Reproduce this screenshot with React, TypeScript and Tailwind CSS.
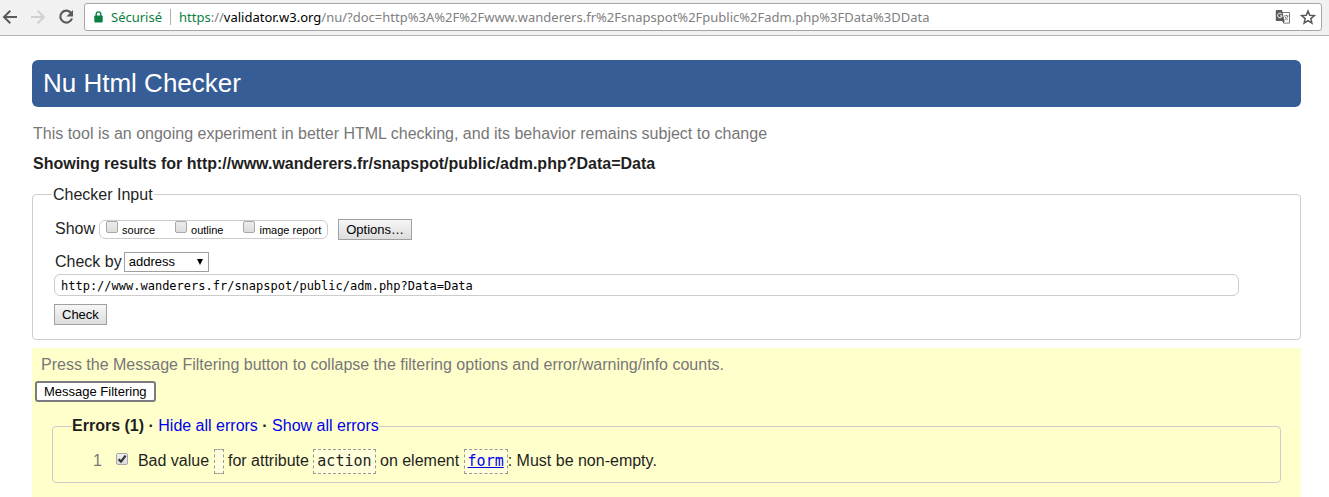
import type { ButtonHTMLAttributes, InputHTMLAttributes, ReactNode } from 'react';

const ADDRESS = 'http://www.wanderers.fr/snapspot/public/adm.php?Data=Data';

function ToolbarButton({ label, children }: { label: string; children: ReactNode }) {
  return (
    <button type="button" aria-label={label} className="flex size-4 shrink-0 items-center justify-center">
      {children}
    </button>
  );
}

function BrowserBar() {
  return (
    <header className="flex h-9 items-center border-b border-[#b4b4b4] bg-[#f1f1f1] pr-[7px] pb-px pl-0.5">
      <nav className="mr-[10px] flex gap-3" aria-label="Browser">
        <ToolbarButton label="Back">
          <svg width="16" height="16" viewBox="0 0 16 16" fill="none" stroke="#5a5a5a" strokeWidth="2">
            <path d="M15 8H2.5M8.3 1.7 2 8l6.3 6.3" />
          </svg>
        </ToolbarButton>
        <ToolbarButton label="Forward">
          <svg width="16" height="16" viewBox="0 0 16 16" fill="none" stroke="#d0d0d0" strokeWidth="2">
            <path d="M1 8h12.5M7.7 1.7 14 8l-6.3 6.3" />
          </svg>
        </ToolbarButton>
        <ToolbarButton label="Reload">
          <svg width="16" height="16" viewBox="0 0 16 16" fill="none">
            <path d="M13.3 4.2A6 6 0 1 0 14 9.5" stroke="#5a5a5a" strokeWidth="2.2" />
            <path d="M15 1v6.6H8.4z" fill="#5a5a5a" />
          </svg>
        </ToolbarButton>
      </nav>
      <div className="flex h-7 min-w-0 flex-1 items-center rounded-[3px] border border-[#a6a6a6] bg-white pr-[5px] pl-[9px] font-['Noto_Sans','Open_Sans',sans-serif] text-[13px]">
        <svg width="9" height="12" viewBox="0 0 9 12" className="shrink-0" aria-hidden="true">
          <path d="M2.2 5V3.2a2.3 2.3 0 0 1 4.6 0V5" fill="none" stroke="#0b8043" strokeWidth="1.4" />
          <rect x="0.3" y="4.4" width="8.4" height="7" rx="0.8" fill="#0b8043" />
        </svg>
        <span className="ml-2 text-[#0b8043]">Sécurisé</span>
        <span className="mx-2 h-4 w-px shrink-0 bg-[#b0b0b0]" />
        <div role="textbox" aria-label="Address" className="min-w-0 flex-1 truncate text-[#808080]">
          <span className="text-[#0b8043]">https</span>://<span className="text-black">validator.w3.org</span>
          /nu/?doc=http%3A%2F%2Fwww.wanderers.fr%2Fsnapspot%2Fpublic%2Fadm.php%3FData%3DData
        </div>
        <button type="button" aria-label="Translate" className="mr-[9px] shrink-0">
          <svg width="16" height="16" viewBox="0 0 16 16">
            <path d="M5.5 3.5h9v10.6H8.6z" fill="#fff" stroke="#777" strokeWidth="1" />
            <path d="M1.8 1H7l2.6 11H1.8a1 1 0 0 1-1-1V2a1 1 0 0 1 1-1z" fill="#5a5a5a" />
            <path d="M6.6 4.9a2.3 2.3 0 1 0 .6 2H5" fill="none" stroke="#fff" strokeWidth="1" />
            <path d="M9.3 6.8h4.2M11.4 5.8v1M12.8 7c-.4 1.8-1.4 3-2.6 4M10 7.8c.7 1.6 1.7 2.6 3 3.4" fill="none" stroke="#777" strokeWidth="0.9" />
            <path d="M7.3 12h2.4l-1.2 2z" fill="#5a5a5a" />
          </svg>
        </button>
        <button type="button" aria-label="Bookmark this page" className="shrink-0">
          <svg width="16" height="16" viewBox="0 0 16 16">
            <path
              d="M8 2l1.7 4.2 4.6.4-3.5 3 1.1 4.5L8 11.7l-3.9 2.4 1.1-4.5-3.5-3 4.6-.4z"
              fill="none"
              stroke="#5a5a5a"
              strokeWidth="1.5"
            />
          </svg>
        </button>
      </div>
    </header>
  );
}

function GreyButton(props: ButtonHTMLAttributes<HTMLButtonElement>) {
  return (
    <button
      type="button"
      className="block h-[21px] border border-[#a0a0a0] bg-linear-to-b from-[#f6f6f6] to-[#dddddd] px-[7px] text-[13px] leading-[19px] text-black"
      {...props}
    />
  );
}

function Tick({ className = '', ...rest }: InputHTMLAttributes<HTMLInputElement>) {
  return (
    <span className={`relative flex size-3 shrink-0 ${className}`}>
      <input
        type="checkbox"
        className="peer size-3 appearance-none rounded-xs border border-[#a8a8a8] bg-linear-to-b from-[#ececec] to-[#dcdcdc]"
        {...rest}
      />
      <svg
        viewBox="0 0 12 12"
        className="pointer-events-none absolute inset-0 hidden size-3 peer-checked:block"
        fill="none"
        stroke="#333"
        strokeWidth="2.2"
      >
        <path d="M2.6 6.2 5 8.6l4.6-6" />
      </svg>
    </span>
  );
}

function ShowOption({ id, label }: { id: string; label: string }) {
  return (
    <div className="flex items-start gap-1">
      <Tick id={id} />
      <label htmlFor={id} className="pt-px text-[11px] leading-4 text-black">
        {label}
      </label>
    </div>
  );
}

function Code({ children }: { children?: ReactNode }) {
  return (
    <code className="inline-flex h-[25px] min-w-[10px] items-center border border-dashed border-[#999] bg-[#ffffe6]/60 px-[3px] align-middle font-['DejaVu_Sans_Mono',monospace] text-[15px]">
      {children}
    </code>
  );
}

function CheckerInput() {
  return (
    <fieldset className="mt-[10px] rounded-[4px] border border-[#ccc] pr-[61px] pb-[14px] pl-[21px]">
      <legend className="-ml-0.5 px-px pt-px">Checker Input</legend>
      <div className="mt-[14px] flex items-center">
        <span className="mr-1 pb-px pl-px">Show</span>
        <div className="flex h-[19px] items-start gap-5 rounded-md border border-[#ccc] px-[6px]">
          <ShowOption id="show-source" label="source" />
          <ShowOption id="show-outline" label="outline" />
          <ShowOption id="show-image" label="image report" />
        </div>
        <div className="ml-[10px]">
          <GreyButton>Options…</GreyButton>
        </div>
      </div>
      <div className="mt-3 flex items-center gap-0.5">
        <label htmlFor="check-by" className="pl-px">
          Check by
        </label>
        <div className="relative">
          <select
            id="check-by"
            defaultValue="address"
            className="block h-5 w-[85px] appearance-none border border-[#a0a0a0] bg-white pl-1 text-[13px] leading-[18px] text-black"
          >
            <option value="address">address</option>
            <option value="upload">file upload</option>
            <option value="text">text input</option>
          </select>
          <svg viewBox="0 0 6 6" className="pointer-events-none absolute top-[7px] right-[6px] size-[6px]">
            <path d="M0 0h6L3 6z" fill="#000" />
          </svg>
        </div>
      </div>
      <input
        aria-label="Address to check"
        type="url"
        defaultValue={ADDRESS}
        className="mt-0.5 block h-[22px] w-full rounded-md border border-[#ccc] bg-white px-[6px] pt-0.5 font-['DejaVu_Sans_Mono',monospace] text-xs text-black"
      />
      <div className="mt-2">
        <GreyButton type="submit">Check</GreyButton>
      </div>
    </fieldset>
  );
}

function Filtering() {
  return (
    <section className="mt-2 bg-[#ffffcc] px-5 pt-[7px] pb-5">
      <p className="-ml-[11px] text-[#777]">
        Press the Message Filtering button to collapse the filtering options and error/warning/info counts.
      </p>
      <button
        type="button"
        className="mt-[6px] -ml-[17px] block h-[21px] rounded-[3px] border-2 border-[#7a7a80] bg-white px-[7px] text-[13px] leading-[17px] text-black"
      >
        Message Filtering
      </button>
      <fieldset className="mt-[14px] rounded-[4px] border border-[#ccc] pb-2 pl-10">
        <legend className="-ml-[21px]">
          <b>Errors (1)</b> <b>·</b>{' '}
          <a href="#hide" className="text-[#0000ee]">
            Hide all errors
          </a>{' '}
          <b>·</b>{' '}
          <a href="#show" className="text-[#0000ee]">
            Show all errors
          </a>
        </legend>
        <ol className="mt-3">
          <li className="flex items-center">
            <span className="mr-[14px] text-[#777]">1</span>
            <Tick id="error-1" defaultChecked className="mr-[10px] mb-1" />
            <label htmlFor="error-1" className="leading-[25px]">
              Bad value <Code /> for attribute <Code>action</Code> on element{' '}
              <Code>
                <a href="#form" className="text-[#0000ee] underline">
                  form
                </a>
              </Code>
              : Must be non-empty.
            </label>
          </li>
        </ol>
      </fieldset>
    </section>
  );
}

export default function App() {
  return (
    <div className="bg-white font-['Liberation_Sans',Arial,sans-serif] text-base leading-5 text-[#1f1f1f]">
      <BrowserBar />
      <main className="pt-6 pr-7 pl-8">
        <h1 className="rounded-md bg-[#365d95] px-[11px] py-2 text-[26px] leading-[31px] text-white">Nu Html Checker</h1>
        <p className="mt-[17px] pl-px text-[#777]">
          This tool is an ongoing experiment in better HTML checking, and its behavior remains subject to change
        </p>
        <h2 className="mt-[10px] pl-px font-bold text-[#1f1f1f]">Showing results for {ADDRESS}</h2>
        <CheckerInput />
        <Filtering />
      </main>
    </div>
  );
}
